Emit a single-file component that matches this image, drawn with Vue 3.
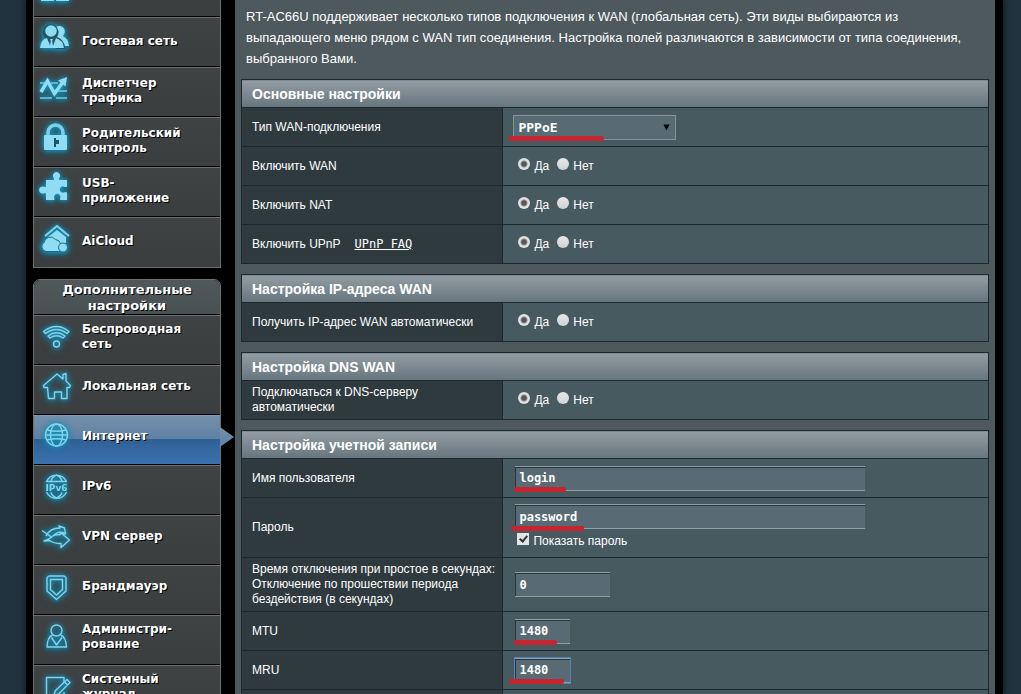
<script setup>
import { ref } from 'vue'

const general = [
  { icon: 'map', label: '' },
  { icon: 'guest', label: 'Гостевая сеть' },
  { icon: 'traffic', label: 'Диспетчер\nтрафика' },
  { icon: 'lock', label: 'Родительский\nконтроль' },
  { icon: 'usb', label: 'USB-\nприложение' },
  { icon: 'cloud', label: 'AiCloud' }
]
const advanced = [
  { icon: 'wifi', label: 'Беспроводная\nсеть' },
  { icon: 'house', label: 'Локальная сеть' },
  { icon: 'globe', label: 'Интернет', active: true },
  { icon: 'ipv6', label: 'IPv6' },
  { icon: 'vpn', label: 'VPN сервер' },
  { icon: 'shield', label: 'Брандмауэр' },
  { icon: 'admin', label: 'Администри-\nрование' },
  { icon: 'log', label: 'Системный\nжурнал' }
]
const menus = [
  { title: '', items: general },
  { title: 'Дополнительные настройки', items: advanced }
]

const sections = [
  {
    title: 'Основные настройки',
    rows: [
      { id: 'type', label: 'Тип WAN-подключения', kind: 'select' },
      { id: 'wan', label: 'Включить WAN', kind: 'radio' },
      { id: 'nat', label: 'Включить NAT', kind: 'radio' },
      { id: 'upnp', label: 'Включить UPnP', kind: 'radio', link: 'UPnP FAQ' }
    ]
  },
  {
    title: 'Настройка IP-адреса WAN',
    rows: [{ id: 'ip', label: 'Получить IP-адрес WAN автоматически', kind: 'radio' }]
  },
  {
    title: 'Настройка DNS WAN',
    rows: [{ id: 'dns', label: 'Подключаться к DNS-серверу автоматически', kind: 'radio' }]
  },
  {
    title: 'Настройка учетной записи',
    rows: [
      { id: 'login', label: 'Имя пользователя', kind: 'text', size: 'long' },
      { id: 'password', label: 'Пароль', kind: 'text', size: 'long', toggle: true },
      { id: 'idle', label: 'Время отключения при простое в секундах: Отключение по прошествии периода бездействия (в секундах)', kind: 'text', size: 'medium' },
      { id: 'mtu', label: 'MTU', kind: 'text', size: 'short' },
      { id: 'mru', label: 'MRU', kind: 'text', size: 'short', focus: true },
      { id: 'blank', kind: 'blank' }
    ]
  }
]

const values = ref({
  type: 'PPPoE', wan: 'yes', nat: 'yes', upnp: 'yes', ip: 'yes', dns: 'yes',
  login: 'login', password: 'password', idle: '0', mtu: '1480', mru: '1480'
})
const marked = ['login', 'password', 'mtu', 'mru']
const showPassword = ref(true)
</script>

<template>
  <div class="page">
    <aside class="sidebar">
      <nav v-for="(menu, m) in menus" :key="m" class="menu" :class="{ titled: menu.title }">
        <h2 v-if="menu.title" class="menu-title">{{ menu.title }}</h2>
        <a v-for="item in menu.items" :key="item.icon" href="#" class="item" :class="{ active: item.active }">
          <svg class="icon" viewBox="0 0 40 40" aria-hidden="true">
            <g v-if="item.icon === 'map'" class="solid">
              <rect x="5" y="20" width="13" height="13" /><rect x="20" y="20" width="13" height="13" />
            </g>
            <g v-else-if="item.icon === 'guest'">
              <path class="solid" d="M20 9 A5.300 5.300 0 1 1 26.500 18 Q32 20 33 28 H22 Q19 20 20 9Z" />
              <path class="gap" d="M9 20 A8 8 0 1 1 21 19 Q28 21 29.500 31 H20Z" />
              <circle class="solid" cx="15" cy="13" r="5.800" />
              <path class="solid" d="M4 30 Q5 21 11 20 L14 28 L14.800 23 L14 21 H17 L16.200 23 L17 28 L20 20 Q27 22 28 30Z" />
            </g>
            <g v-else-if="item.icon === 'traffic'">
              <path class="thin" d="M4 15 H9 M15 15 H22 M4 23 H6 M22 23 H31 M4 30 H16 M20 30 H31" />
              <path class="zig" d="M5 24 L11.500 13 L18.500 25.500 L27 14" />
              <path class="solid" d="M22 12.500 L31 9 L29.500 18.500Z" />
            </g>
            <g v-else-if="item.icon === 'lock'">
              <path class="shackle" d="M12 18 V14.500 A7.500 7.500 0 0 1 27 14.500 V18" />
              <rect class="solid" x="8" y="17" width="23" height="15" rx="1" />
              <path class="cut" d="M18 20 H20 V22 H23 V26 H20 V29 H18Z" />
            </g>
            <path v-else-if="item.icon === 'usb'" class="solid" d="M10 12 H17.500 Q18.500 11 17.500 9.500 A3.500 3.500 0 1 1 23.500 9.500 Q22.500 11 23.500 12 H31 V18.500 Q30 19.500 28.500 18.700 A3.200 3.200 0 1 0 28.500 24.300 Q30 23.500 31 24.500 V32 H24.500 Q23.500 31 24.300 30 A3.200 3.200 0 1 0 18.200 30 Q19 31 18 32 H10 V25.500 Q9 24.500 8 25.200 A3.500 3.500 0 1 1 8 18.800 Q9 19.500 10 18.500Z" />
            <g v-else-if="item.icon === 'cloud'">
              <path class="line roof" d="M9 18 L21 8 L33 18" />
              <path class="solid" d="M12 19 L21 12 L30 19 V25 H12Z" />
              <path class="solid edge" d="M10 33.500 A5 5 0 0 1 8 24.500 A6.500 6.500 0 0 1 19.500 21.500 Q24 22 24.500 26 Q28 31 23 33.500Z" />
              <circle class="solid edge" cx="27" cy="29.500" r="4.500" />
            </g>
            <g v-else-if="item.icon === 'wifi'" class="line">
              <path d="M7.500 15.500 Q20.500 5.500 33 15.500 L31 17.500 Q20.500 9.500 9.500 17.500Z" />
              <path d="M12 20 Q20.500 13.500 29 20 L27 22 Q20.500 17.500 14 22Z" />
              <circle cx="20.500" cy="28" r="3" />
            </g>
            <path v-else-if="item.icon === 'house'" class="line" d="M11.500 21.500 H8 L7.500 19.500 L21 8 L27 13 V8.500 L30 7.500 V15 L34.500 19.500 L33.500 21.500 H31 V32.500 H25.500 V26 H18.500 V32.500 H12.500Z" />
            <g v-else-if="item.icon === 'globe'" class="line">
              <circle cx="20.500" cy="19" r="11" />
              <ellipse cx="20.500" cy="19" rx="6" ry="11" />
              <path d="M11 14 Q20.500 16.500 30 14 M11 24 Q20.500 21.500 30 24 M9.500 19 H31.500" />
            </g>
            <g v-else-if="item.icon === 'ipv6'">
              <g class="line">
                <path d="M10.500 15.500 A11 11 0 0 1 30.500 15.500Z M15 15 Q16 11 20.500 9 Q25 11 26 15" />
                <path d="M10.500 26 A11 11 0 0 0 30.500 26 M15 26.500 Q16 30 20.500 32 Q25 30 26 26.500" />
              </g>
              <text class="glyph" x="20.500" y="24.500" text-anchor="middle">IPv6</text>
            </g>
            <path v-else-if="item.icon === 'vpn'" class="line" d="M6 14.500 L15.500 21 Q18 18.500 24.500 18.500 L24 16 L33.500 24 L25 31.500 V27.500 Q17.500 27.500 13.500 24.500 L8 25 Q13.500 23 15.500 21 M10 20 Q14 12 24 12 L23 10 L28.500 12 L29.500 18 L26.500 16.500 Q22 15 17 20" />
            <g v-else-if="item.icon === 'shield'" class="line">
              <path d="M13 10 H28 L30 11.500 V25 L20.500 33.500 L11 25 V11.500Z" />
              <path d="M14.500 13.500 H26.500 V23.500 L20.500 29 L14.500 23.500Z" />
            </g>
            <g v-else-if="item.icon === 'admin'" class="line">
              <circle cx="20.500" cy="14.500" r="5.500" />
              <path d="M16.500 19 Q11.500 21 11 31 H30.500 Q30 21 24.500 19 M15.500 21.500 L20.500 29 L26 21.500" />
            </g>
            <g v-else class="line">
              <path d="M28 17 V11.500 H10.500 V34 H28 V26" />
              <path d="M19 25 L31 13.500 L34 16.500 L22 28.500 L18 30Z M28.500 16 L31.500 19" />
            </g>
          </svg>
          <span class="item-label">{{ item.label }}</span>
        </a>
      </nav>
    </aside>

    <main class="content">
      <p class="intro">RT-AC66U поддерживает несколько типов подключения к WAN (глобальная сеть). Эти виды выбираются из выпадающего меню рядом с WAN тип соединения. Настройка полей различаются в зависимости от типа соединения, выбранного Вами.</p>

      <table v-for="section in sections" :key="section.title" class="form">
        <colgroup>
          <col class="names" />
          <col />
        </colgroup>
        <thead>
          <tr><th colspan="2">{{ section.title }}</th></tr>
        </thead>
        <tbody>
          <tr v-for="row in section.rows" :key="row.id">
            <th scope="row">
              <span v-if="row.kind === 'radio'" :id="'label-' + row.id">{{ row.label }}</span>
              <label v-else-if="row.label" :for="row.id">{{ row.label }}</label>
              <a v-if="row.link" class="faq" href="#">{{ row.link }}</a>
            </th>
            <td>
              <div v-if="row.kind === 'select'" class="field picker">
                <select :id="row.id" v-model="values.type">
                  <option>PPPoE</option>
                  <option>PPTP</option>
                  <option>L2TP</option>
                </select>
                <svg class="arrow" viewBox="0 0 8 7" aria-hidden="true"><path d="M0.500 0 H7.500 L4 7Z" /></svg>
                <i class="mark mark-type"></i>
              </div>
              <div v-else-if="row.kind === 'radio'" class="radios" role="radiogroup" :aria-labelledby="'label-' + row.id">
                <label><input v-model="values[row.id]" type="radio" :name="row.id" value="yes" />Да</label>
                <label><input v-model="values[row.id]" type="radio" :name="row.id" value="no" />Нет</label>
              </div>
              <template v-else-if="row.kind === 'text'">
                <div class="field">
                  <input :id="row.id" v-model="values[row.id]" class="text" :class="[row.size, { focus: row.focus }]" type="text" />
                  <i v-if="marked.includes(row.id)" class="mark" :class="'mark-' + row.id"></i>
                </div>
                <label v-if="row.toggle" class="toggle"><input v-model="showPassword" type="checkbox" />Показать пароль</label>
              </template>
            </td>
          </tr>
        </tbody>
      </table>
    </main>
  </div>
</template>

<style>
body {
  background: #21333f;
  overflow: hidden;
}
</style>

<style scoped>
.page {
  display: flex;
  box-sizing: border-box;
  height: 100vh;
  overflow: hidden;
  margin: 0 18px 0 26px;
  padding: 0 8px 0 7px;
  background: #000;
  box-shadow: 0 0 6px 1px #10191f;
  color: #fff;
  font-family: "Liberation Sans", Arial, sans-serif;
  font-size: 12px;
}
.sidebar {
  flex: none;
  width: 188px;
  margin: -33px 14px 0 0;
}
.menu {
  box-sizing: border-box;
  border: 1px solid #6b7071;
  border-top: 0;
  margin-bottom: 11px;
}
.menu.titled {
  border-top: 1px solid #6b7071;
  border-radius: 7px 7px 0 0;
}
.menu-title {
  margin: 0;
  padding: 2px 24px 0;
  border-radius: 6px 6px 0 0;
  border-bottom: 1px solid #000;
  background: linear-gradient(#51585a, #4a5153);
  font: bold 13px/16px "DejaVu Sans", Verdana, sans-serif;
  text-align: center;
  text-shadow: 1px 1px 0 #000;
}
.item {
  position: relative;
  display: flex;
  align-items: center;
  box-sizing: border-box;
  height: 50px;
  padding: 0 0 2px 2px;
  border-top: 1px solid #6b7071;
  border-bottom: 1px solid #000;
  background: linear-gradient(#3f4344, #3a3e3f);
  color: #fff;
  text-decoration: none;
}
.titled .item {
  padding-bottom: 7px;
}
.item:last-child {
  border-bottom: 0;
}
.item.active {
  border-top-color: #7b9dbd;
  background: linear-gradient(#7590ab 0, #5f81a4 47%, #2f6096 48%, #3a72ae 100%);
}
.item.active::after {
  content: "";
  position: absolute;
  left: 100%;
  top: 11px;
  width: 14px;
  height: 20px;
  background: linear-gradient(#7590ab, #5d82a8);
  clip-path: polygon(0 0, 100% 50%, 0 100%);
}
.item-label {
  margin-left: 6px;
  font: bold 12px/15px "DejaVu Sans", Tahoma, sans-serif;
  text-shadow: 1px 1px 0 #000;
  white-space: pre-line;
}
.icon {
  flex: none;
  align-self: flex-start;
  width: 40px;
  height: 40px;
  filter: drop-shadow(0 0 2px #179cc4) drop-shadow(0 1px 3px #0e7fa5);
}
.solid {
  fill: #8fdcf3;
}
.gap {
  fill: #235566;
}
.edge {
  stroke: #1d6f8a;
}
.line, .thin, .zig, .shackle {
  fill: none;
  stroke: #84d3ec;
  stroke-width: 1.400;
  stroke-linejoin: round;
}
.roof {
  stroke-width: 2;
}
.thin {
  stroke: #5cb4d0;
  stroke-width: 1.800;
}
.zig {
  stroke: #8fdcf3;
  stroke-width: 3.500;
  stroke-linejoin: miter;
}
.shackle {
  stroke: #7ccfe8;
  stroke-width: 3.500;
}
.cut {
  fill: #1f5666;
}
.glyph {
  fill: #84d3ec;
  font: bold 9px "DejaVu Sans", sans-serif;
}
.content {
  flex: 1;
  min-width: 0;
  padding: 6px 6px 0;
  background: #4d595d;
}
.intro {
  margin: 0 16px 10px 5px;
  font-size: 13px;
  line-height: 21px;
}
.form {
  width: 100%;
  margin-bottom: 10px;
  border-collapse: collapse;
  table-layout: fixed;
}
.names {
  width: 35%;
}
.form th, .form td {
  box-sizing: border-box;
  border: 1px solid #1b2a2f;
  text-align: left;
  font-weight: normal;
}
.form thead th {
  height: 28px;
  padding: 0 10px;
  background: linear-gradient(#929da3, #66757c);
  font: bold 14px/16px "Liberation Sans", Arial, sans-serif;
}
.form tbody th {
  height: 39px;
  padding: 4px 6px 4px 10px;
  background: #2f3a3e;
  line-height: 15px;
}
.form td {
  padding: 6px 10px 6px 12px;
  background: #475a5f;
}
.faq {
  margin-left: 14px;
  color: #fff;
  font: 12px/15px "DejaVu Sans Mono", monospace;
}
.field {
  position: relative;
  display: flex;
}
.picker {
  width: 163px;
  margin-left: -2px;
}
select {
  appearance: none;
  width: 100%;
  height: 25px;
  padding: 0 4px;
  border: 1px solid #82939a;
  border-radius: 0;
  background: #576b73;
  color: #fff;
  font: bold 13px "DejaVu Sans Mono", monospace;
}
.arrow {
  position: absolute;
  right: 6px;
  top: 9px;
  width: 7px;
  height: 7px;
  pointer-events: none;
}
.text {
  box-sizing: border-box;
  height: 25px;
  padding: 0 4px;
  border: 0;
  border-top: 1px solid #8d9ea5;
  border-bottom: 1px solid #8d9ea5;
  border-radius: 0;
  outline: 0;
  background: #586b74;
  box-shadow: inset 1px 1px 0 #28373d;
  color: #fff;
  font: bold 12px "DejaVu Sans Mono", monospace;
}
.long {
  width: 350px;
}
.medium {
  width: 95px;
}
.short {
  width: 55px;
}
.focus {
  box-shadow: inset 1px 1px 0 #28373d, 0 0 0 1px #5482bd;
}
.mark {
  position: absolute;
  left: -1px;
  bottom: -1px;
  height: 5px;
  border-radius: 2px;
  background: #c5252f;
}
.mark-type {
  left: -4px;
  width: 95px;
}
.mark-login {
  width: 52px;
}
.mark-password {
  left: -4px;
  bottom: -2px;
  width: 73px;
}
.mark-mtu {
  width: 43px;
}
.mark-mru {
  left: -6px;
  width: 55px;
}
.radios {
  display: flex;
  gap: 8px;
  padding-left: 3px;
}
.radios label, .toggle {
  display: flex;
  align-items: center;
  gap: 4px;
  line-height: 15px;
}
input[type="radio"], input[type="checkbox"] {
  appearance: none;
  box-sizing: border-box;
  width: 12px;
  height: 12px;
  margin: 0 0 4px;
}
input[type="radio"] {
  border-radius: 50%;
  background: linear-gradient(#e8e8e8, #cfd2d3);
}
input[type="radio"]:checked {
  background: radial-gradient(circle, #555 0 2px, #8b8b8b 3px, #dfe1e2 4px);
}
input[type="checkbox"] {
  background: #e2e4e5;
  position: relative;
}
input[type="checkbox"]:checked::after {
  content: "";
  position: absolute;
  left: 4px;
  top: 1px;
  width: 3px;
  height: 6px;
  border: solid #333;
  border-width: 0 2px 2px 0;
  transform: rotate(40deg);
}
.toggle {
  margin: 4px 0 2px 2px;
  width: max-content;
}
</style>
